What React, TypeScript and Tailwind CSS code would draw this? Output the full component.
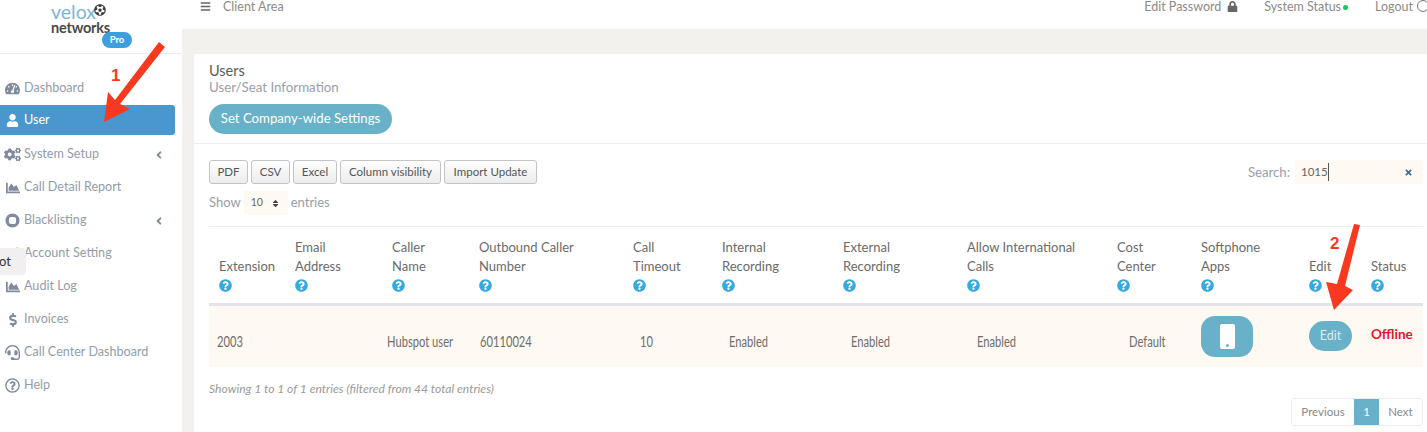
import React from "react";
import {
  FaTachometerAlt, FaUser, FaCogs, FaChartArea, FaDollarSign, FaHeadset, FaRegQuestionCircle,
  FaLock, FaQuestionCircle, FaBars, FaAngleLeft, FaTimes, FaFutbol, FaSort,
} from "react-icons/fa";

const ring = (
  <svg viewBox="0 0 16 16" className="w-[15px] h-[15px]">
    <circle cx="8" cy="8" r="7.5" fill="#7f8b9b" />
    <rect x="4.2" y="4.2" width="7.6" height="7.6" rx="2.2" fill="#fff" />
  </svg>
);

const nav: { label: string; icon: React.ReactNode; active?: boolean; caret?: boolean }[] = [
  { label: "Dashboard", icon: <FaTachometerAlt size={15} /> },
  { label: "User", icon: <FaUser size={13} />, active: true },
  { label: "System Setup", icon: <FaCogs size={17} />, caret: true },
  { label: "Call Detail Report", icon: <FaChartArea size={14} /> },
  { label: "Blacklisting", icon: ring, caret: true },
  { label: "Account Setting", icon: <FaCogs size={15} /> },
  { label: "Audit Log", icon: <FaChartArea size={14} /> },
  { label: "Invoices", icon: <FaDollarSign size={14} /> },
  { label: "Call Center Dashboard", icon: <FaHeadset size={15} /> },
  { label: "Help", icon: <FaRegQuestionCircle size={15} /> },
];

const cols = [76, 97, 87, 154, 89, 121, 124, 150, 84, 108, 62, 62];
const heads: string[][] = [
  ["Extension"],
  ["Email", "Address"],
  ["Caller", "Name"],
  ["Outbound Caller", "Number"],
  ["Call", "Timeout"],
  ["Internal", "Recording"],
  ["External", "Recording"],
  ["Allow International", "Calls"],
  ["Cost", "Center"],
  ["Softphone", "Apps"],
  ["Edit"],
  ["Status"],
];

function Cell({ children, className }: { children: React.ReactNode; className: string }) {
  return (
    <td className={`align-middle pt-[12px] ${className}`}>
      <span className="inline-block origin-left scale-x-[0.77] text-[14.5px] text-[#6f6d6b] whitespace-nowrap">{children}</span>
    </td>
  );
}

function ToolBtn({ children, className }: { children: React.ReactNode; className: string }) {
  return (
    <button className={`h-[24px] rounded-[3px] border border-[#c4c4c4] bg-gradient-to-b from-white to-[#ececec] text-[11.5px] leading-none text-[#555] whitespace-nowrap ${className}`}>
      {children}
    </button>
  );
}

export default function App() {
  return (
    <div className="relative flex h-[432px] w-[1427px] overflow-hidden bg-[#f2f1ee] text-[13px] font-['Lato','Noto_Sans',sans-serif]">
      <aside className="w-[182px] shrink-0 bg-white flex flex-col">
        <div className="h-[54px] border-b border-[#eeeeee] relative">
          <div className="absolute left-[51px] top-[4px] text-[19.5px] leading-[15px] text-[#7db6da]">velox</div>
          <FaFutbol className="absolute left-[94px] top-[4px] text-[#3c3c3c]" size={12} />
          <div className="absolute left-[51px] top-[21px] text-[14.5px] leading-[13px] font-bold text-[#4a4a4a] tracking-[-0.2px]">networks</div>
          <div className="absolute left-[102px] top-[32px] w-[30px] h-[16px] rounded-full bg-[#3d9fe0] text-white text-[9.5px] leading-[16px] text-center font-bold">Pro</div>
        </div>
        <nav className="pt-[18px] flex flex-col">
          {nav.map((n) => (
            <div
              key={n.label}
              className={`flex items-center pr-[18px] ${n.active ? "w-[175px] h-[30px] mb-[3px] rounded-r-[3px] bg-[#4a97cd] text-white" : "h-[33px] text-[#939cab]"}`}
            >
              <span className={`w-[24px] shrink-0 flex justify-center pl-[1px] ${n.active ? "text-white" : "text-[#7f8b9b]"}`}>{n.icon}</span>
              <span className="flex-1 text-[12.6px] whitespace-nowrap">{n.label}</span>
              {n.caret && <FaAngleLeft size={12} className="text-[#7f8b9b] mr-[-1px]" />}
            </div>
          ))}
        </nav>
      </aside>

      <main className="flex-1 min-w-0 flex flex-col">
        <header className="h-[29px] shrink-0 bg-white flex justify-between text-[#8b8b88] text-[12.5px] leading-[14px] pl-[18px]">
          <div className="flex items-start">
            <FaBars size={11} className="text-[#666] mt-[1px]" />
            <span className="ml-[12px]">Client Area</span>
          </div>
          <div className="flex items-start whitespace-nowrap">
            <span>Edit Password</span>
            <FaLock size={11} className="ml-[6px] text-[#666] mt-[1px]" />
            <span className="ml-[26px]">System Status</span>
            <span className="ml-[2px] mt-[5px] w-[5px] h-[5px] rounded-full bg-[#12c95a]" />
            <span className="ml-[27px]">Logout</span>
            <span className="ml-[4px] w-[12px] h-[12px] rounded-full border border-[#777] mr-[-2px]" />
          </div>
        </header>

        <section className="ml-[12px] mt-[25px] flex-1 bg-white">
          <div className="h-[90px] border-b border-[#eeeeee] pl-[15px] pt-[8px]">
            <div className="text-[14.5px] leading-[17px] text-[#5b5b5b]">Users</div>
            <div className="text-[13.3px] leading-[17px] text-[#9a9ea7]">User/Seat Information</div>
            <button className="mt-[8px] w-[183px] h-[30px] rounded-full bg-[#68b1c8] text-white text-[13.2px]">Set Company-wide Settings</button>
          </div>

          <div className="pl-[15px] pr-[4px]">
            <div className="flex justify-between pt-[16px]">
              <div>
                <div className="flex gap-[3px]">
                  <ToolBtn className="w-[39px]">PDF</ToolBtn>
                  <ToolBtn className="w-[39px]">CSV</ToolBtn>
                  <ToolBtn className="w-[44px]">Excel</ToolBtn>
                  <ToolBtn className="w-[101px]">Column visibility</ToolBtn>
                  <ToolBtn className="w-[93px]">Import Update</ToolBtn>
                </div>
                <div className="flex items-center mt-[7px] h-[24px] text-[#9a9ea7]">
                  <span>Show</span>
                  <span className="ml-[3px] w-[44px] h-[24px] bg-[#fefaf3] flex items-center justify-between pl-[7px] pr-[8px] text-[10.5px] text-[#666]">
                    10
                    <FaSort size={9} className="text-[#444]" />
                  </span>
                  <span className="ml-[3px]">entries</span>
                </div>
              </div>
              <div className="flex items-start text-[#9a9ea7]">
                <span className="mt-[3px] text-[13.2px]">Search:</span>
                <span className="ml-[5px] w-[128px] h-[24px] bg-[#fefaf3] flex items-center justify-between pl-[6px] pr-[10px] text-[11.5px] text-[#666]">
                  <span className="border-r border-[#555] pr-[0.5px]">1015</span>
                  <FaTimes size={9} className="text-[#3f66a8]" />
                </span>
              </div>
            </div>

            <table className="mt-[11px] w-[1214px] table-fixed border-collapse">
              <colgroup>
                {cols.map((w, i) => (
                  <col key={i} style={{ width: w }} />
                ))}
              </colgroup>
              <thead>
                <tr className="border-t border-[#eeeeee] border-b-[3px] border-b-[#e4e4ea]">
                  {heads.map((h) => (
                    <th key={h.join()} className="pl-[10px] pt-[11px] pb-[8px] text-left align-bottom font-normal text-[13px] leading-[19px] text-[#6b6b6b] whitespace-nowrap">
                      {h.map((l) => (
                        <div key={l}>{l}</div>
                      ))}
                      <div className="h-[19px] flex items-center">
                        <FaQuestionCircle size={13} className="text-[#36a9df]" />
                      </div>
                    </th>
                  ))}
                </tr>
              </thead>
              <tbody>
                <tr className="h-[62px] bg-[#fef9f3]">
                  <Cell className="pl-[8px]">2003</Cell>
                  <td />
                  <Cell className="pl-[5px]">Hubspot user</Cell>
                  <Cell className="pl-[11px]">60110024</Cell>
                  <Cell className="pl-[17px]">10</Cell>
                  <Cell className="pl-[17px]">Enabled</Cell>
                  <Cell className="pl-[18px]">Enabled</Cell>
                  <Cell className="pl-[20px]">Enabled</Cell>
                  <Cell className="pl-[22px]">Default</Cell>
                  <td className="pl-[10px]">
                    <div className="w-[52px] h-[41px] rounded-[14px] bg-[#68b1c8] flex items-center justify-center">
                      <div className="relative w-[15px] h-[25px] rounded-[2px] bg-white">
                        <span className="absolute left-[6px] bottom-[2px] w-[3px] h-[3px] rounded-full bg-[#68b1c8]" />
                      </div>
                    </div>
                  </td>
                  <td className="pl-[10px]">
                    <div className="w-[43px] h-[30px] rounded-full bg-[#68b1c8] text-[#dcedf2] text-[12.5px] leading-[30px] text-center">Edit</div>
                  </td>
                  <td className="pl-[10px] pb-[4px] text-[13.5px] font-bold text-[#e8142a] whitespace-nowrap">Offline</td>
                </tr>
              </tbody>
            </table>

            <div className="mt-[15px] text-[12.1px] leading-[14px] italic text-[#9a9a9a]">Showing 1 to 1 of 1 entries (filtered from 44 total entries)</div>

            <div className="mt-[2px] flex justify-end">
              <div className="flex h-[28px] rounded-[3px] border border-[#eeeeee] text-[11.5px] leading-[26px] text-[#8a8a8a]">
                <span className="w-[62px] text-center">Previous</span>
                <span className="w-[25px] text-center bg-[#68b1c8] text-white">1</span>
                <span className="w-[43px] text-center">Next</span>
              </div>
            </div>
          </div>
        </section>
      </main>

      <div className="absolute left-0 top-[248px] w-[26px] h-[27px] rounded-r-[4px] bg-[#f1eff0] text-[13px] leading-[27px] text-[#333] overflow-hidden">
        <span className="block ml-[-1px]">ot</span>
      </div>

      <svg className="absolute left-0 top-0 w-[1427px] h-[432px] pointer-events-none" viewBox="0 0 1427 432">
        <g fill="#f8391f">
          <polygon points="159,42 165,47 120,104 130,109 104,122 108,92 115,100" />
          <polygon points="1354,224 1360,225 1345,286 1353,290 1334,310 1326,282 1337,284" />
        </g>
      </svg>
      <span className="absolute left-[111px] top-[66px] text-[17px] leading-[20px] font-bold text-[#f8391f] font-['Liberation_Sans',sans-serif]">1</span>
      <span className="absolute left-[1330px] top-[234px] text-[17px] leading-[20px] font-bold text-[#f8391f] font-['Liberation_Sans',sans-serif]">2</span>
    </div>
  );
}
